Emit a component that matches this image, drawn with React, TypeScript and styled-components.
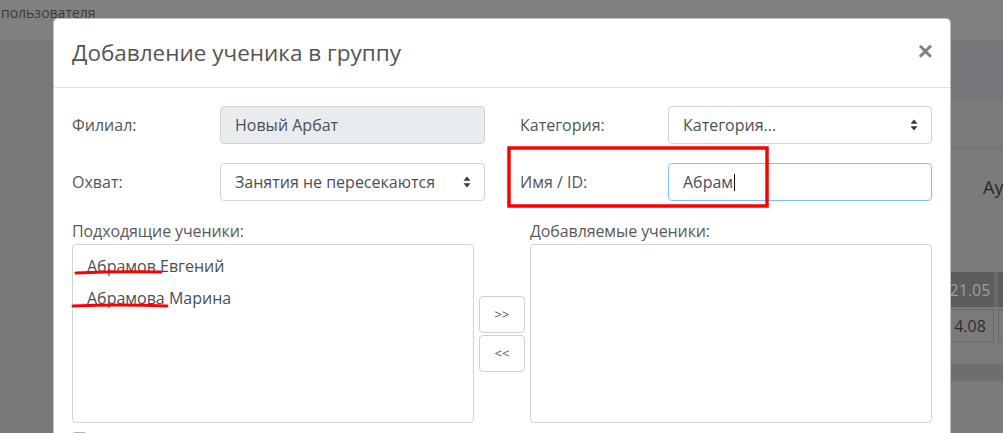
import React from "react";
import styled, { createGlobalStyle } from "styled-components";

const GlobalStyle = createGlobalStyle`
  html, body { margin: 0; padding: 0; }
  body {
    font-family: "Open Sans", "Noto Sans", sans-serif;
    background: #77787a;
    overflow: hidden;
  }
  * { box-sizing: border-box; }
`;

const Page = styled.div`
  position: relative;
  width: 1003px;
  height: 433px;
  overflow: hidden;
  background: #77787a;
  display: flex;
  flex-direction: column;
`;

const TopBar = styled.div`
  height: 41px;
  flex: none;
  background: #808080;
  border-bottom: 1px solid #79797a;
  padding: 3px 0 0 1px;
  font-size: 14px;
  line-height: 20px;
  color: #3c3c3c;
`;

const PageBody = styled.div`
  flex: 1;
  display: flex;
  justify-content: flex-end;
`;

const SidePanel = styled.div`
  width: 420px;
  display: flex;
  flex-direction: column;
`;

const Band = styled.div`
  height: 58px;
  background: #75767a;
`;

const Card = styled.div`
  flex: 1;
  background: #7b7b7b;
  display: flex;
  flex-direction: column;
`;

const CardHeader = styled.div`
  height: 49px;
  border-bottom: 1px solid #6f6f6f;
`;

const CardHeading = styled.div`
  height: 124px;
  padding: 27px 0 0 400px;
  font-size: 18px;
  line-height: 24px;
  color: #2a2a2a;
  white-space: nowrap;
`;

const TableRow = styled.div<{ $dark?: boolean }>`
  display: flex;
  gap: 4px;
  height: ${(p) => (p.$dark ? 35 : 33)}px;
  margin-bottom: ${(p) => (p.$dark ? 2 : 0)}px;
  background: ${(p) => (p.$dark ? "#6a6a6a" : "transparent")};
`;

const Cell = styled.div<{ $w: number; $dark?: boolean }>`
  width: ${(p) => p.$w}px;
  flex: none;
  display: flex;
  align-items: center;
  justify-content: center;
  font-size: 16px;
  background: ${(p) => (p.$dark ? "#5c5c5c" : "#7b7b7b")};
  color: ${(p) => (p.$dark ? "#9d9d9d" : "#2e2e2e")};
  border: ${(p) => (p.$dark ? "none" : "1px solid #6a6a6a")};
`;

const Stripe = styled.div`
  margin-top: 22px;
  height: 17px;
  background: #6e6e6e;
`;

/* ---------- Modal ---------- */

const Modal = styled.div`
  position: absolute;
  left: 53px;
  top: 18px;
  width: 898px;
  height: 440px;
  background: #fff;
  border: 1px solid rgba(0, 0, 0, 0.25);
  border-radius: 5px;
  display: flex;
  flex-direction: column;
`;

const ModalHeader = styled.div`
  display: flex;
  align-items: center;
  padding: 16px 18px;
  border-bottom: 1px solid #e0e0e0;
`;

const Title = styled.h4`
  margin: 0;
  font-size: 22.5px;
  font-weight: 400;
  line-height: 36px;
  color: #555;
`;

const CloseButton = styled.button`
  margin-left: auto;
  margin-top: -5px;
  margin-right: -1px;
  border: none;
  background: transparent;
  padding: 0;
  font-family: "Liberation Sans", Arial, sans-serif;
  font-size: 26px;
  font-weight: 700;
  line-height: 1;
  color: #000;
  opacity: 0.5;
`;

const ModalBody = styled.div`
  padding: 18px 18px 0;
`;

const FormGrid = styled.div`
  display: grid;
  grid-template-columns: 413px 412px;
  column-gap: 35px;
  row-gap: 19px;
`;

const Field = styled.div`
  display: flex;
  align-items: center;
`;

const Label = styled.div`
  width: 148px;
  flex: none;
  font-size: 16px;
  line-height: 24px;
  color: #555;
`;

const Control = styled.div<{ $disabled?: boolean; $focused?: boolean }>`
  flex: 1;
  height: 38px;
  display: flex;
  align-items: center;
  padding: 0 14px;
  font-size: 16px;
  color: #495057;
  background: ${(p) => (p.$disabled ? "#e9ecef" : "#fff")};
  border: 1px solid ${(p) => (p.$focused ? "#80bdff" : "#ced4da")};
  border-radius: 4px;
  white-space: nowrap;
`;

const Arrows = styled.svg`
  margin-left: auto;
  margin-right: -1px;
  flex: none;
`;

const Caret = styled.span`
  display: inline-block;
  width: 1px;
  height: 17px;
  margin-left: 1px;
  background: #111;
`;

const ListsGrid = styled.div`
  margin-top: 20px;
  display: grid;
  grid-template-columns: 402px 46px 402px;
  grid-template-rows: 23px 179px;
  column-gap: 5px;
`;

const ListLabel = styled.div<{ $col: number }>`
  grid-column: ${(p) => p.$col};
  grid-row: 1;
  font-size: 16px;
  line-height: 20px;
  color: #5a5a5a;
  letter-spacing: -0.1px;
`;

const ListBox = styled.div<{ $col: number }>`
  grid-column: ${(p) => p.$col};
  grid-row: 2;
  border: 1px solid #ced4da;
  border-radius: 4px;
  padding: 5px 0;
  display: flex;
  flex-direction: column;
`;

const ListItem = styled.div`
  height: 32px;
  line-height: 32px;
  padding-left: 14px;
  font-size: 16px;
  color: #495057;
  white-space: pre;
`;

const MoveButtons = styled.div`
  grid-column: 2;
  grid-row: 2;
  display: flex;
  flex-direction: column;
  justify-content: center;
  gap: 2px;
`;

const MoveButton = styled.button`
  height: 37px;
  width: 46px;
  background: #fff;
  border: 1px solid #d0d0d0;
  border-radius: 4px;
  font-family: "Open Sans", sans-serif;
  font-size: 13px;
  color: #555;
  padding: 0;
`;

const CheckRow = styled.div`
  margin-top: 9px;
  display: flex;
  align-items: center;
  gap: 8px;
`;

const CheckBox = styled.span`
  width: 15px;
  height: 15px;
  border: 1px solid #adb5bd;
  border-radius: 3px;
  background: #fff;
`;

const Annotations = styled.svg`
  position: absolute;
  left: 0;
  top: 0;
  pointer-events: none;
`;

const SortIcon = () => (
  <Arrows width="8" height="12" viewBox="0 0 8 12">
    <path d="M4 0.5 L7.5 4.8 L0.5 4.8 Z" fill="#343a40" />
    <path d="M4 11.5 L7.5 7.2 L0.5 7.2 Z" fill="#343a40" />
  </Arrows>
);

export default function App() {
  return (
    <>
      <GlobalStyle />
      <Page>
        <TopBar>пользователя</TopBar>
        <PageBody>
          <SidePanel>
            <Band />
            <Card>
              <CardHeader />
              <CardHeading>Аудитория</CardHeading>
              <TableRow $dark>
                <Cell $w={359} $dark />
                <Cell $w={48} $dark>21.05</Cell>
                <Cell $w={48} $dark />
              </TableRow>
              <TableRow>
                <Cell $w={359} />
                <Cell $w={48}>4.08</Cell>
                <Cell $w={48} />
              </TableRow>
              <Stripe />
            </Card>
          </SidePanel>
        </PageBody>

        <Modal>
          <ModalHeader>
            <Title>Добавление ученика в группу</Title>
            <CloseButton>×</CloseButton>
          </ModalHeader>
          <ModalBody>
            <FormGrid>
              <Field>
                <Label>Филиал:</Label>
                <Control $disabled>Новый Арбат</Control>
              </Field>
              <Field>
                <Label>Категория:</Label>
                <Control>
                  Категория...
                  <SortIcon />
                </Control>
              </Field>
              <Field>
                <Label>Охват:</Label>
                <Control>
                  Занятия не пересекаются
                  <SortIcon />
                </Control>
              </Field>
              <Field>
                <Label>Имя / ID:</Label>
                <Control $focused>
                  Абрам
                  <Caret />
                </Control>
              </Field>
            </FormGrid>

            <ListsGrid>
              <ListLabel $col={1}>Подходящие ученики:</ListLabel>
              <ListLabel $col={3}>Добавляемые ученики:</ListLabel>
              <ListBox $col={1}>
                <ListItem>Абрамов Евгений</ListItem>
                <ListItem>Абрамова Марина</ListItem>
              </ListBox>
              <MoveButtons>
                <MoveButton>&gt;&gt;</MoveButton>
                <MoveButton>&lt;&lt;</MoveButton>
              </MoveButtons>
              <ListBox $col={3} />
            </ListsGrid>

            <CheckRow>
              <CheckBox />
            </CheckRow>
          </ModalBody>
        </Modal>

        <Annotations width="1003" height="433" viewBox="0 0 1003 433">
          <rect x="509" y="148" width="258" height="58" fill="none" stroke="#ff0000" strokeWidth="3.5" />
          <path d="M76 273 Q118 271 161 272" fill="none" stroke="#f00" strokeWidth="3" strokeLinecap="round" />
          <path d="M73 306 Q120 304 167 306" fill="none" stroke="#f00" strokeWidth="3" strokeLinecap="round" />
        </Annotations>
      </Page>
    </>
  );
}
